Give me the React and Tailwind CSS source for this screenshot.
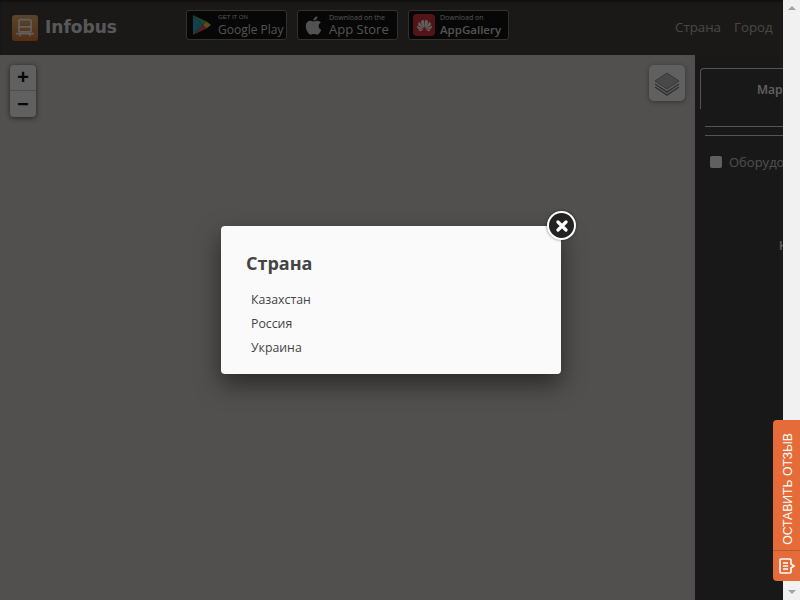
import { FaApple } from "react-icons/fa";
import { SiHuawei } from "react-icons/si";

const BusLogo = () => (
  <div className="w-[26px] h-[26px] rounded-[3px] bg-gradient-to-b from-[#e8b070] to-[#e0701e] flex items-center justify-center">
    <svg width="20" height="20" viewBox="0 0 18 18" fill="none" stroke="#fff" strokeWidth="1.500">
      <rect x="3.500" y="1.500" width="11" height="11" rx="1.500" />
      <path d="M3.500 8h11M1 14h16M4.500 14v2.500M13.500 14v2.500" />
    </svg>
  </div>
);

const PlayIcon = () => (
  <svg width="20" height="22" viewBox="0 0 20 22">
    <path d="M1 1v20l10-10z" fill="#1ea7c9" />
    <path d="M1 1l10 10 3.500-3.500z" fill="#45b76a" />
    <path d="M1 21l10-10 3.500 3.500z" fill="#e2474a" />
    <path d="M14.500 7.500L19 11l-4.500 3.500L11 11z" fill="#f7c322" />
  </svg>
);

const StoreBadge = ({ icon, top, bottom, topClass, bottomClass }) => (
  <div className="w-[101px] h-[30px] rounded-[3px] border border-[#7a7a7a] bg-black flex items-center gap-[5px] px-[4px] overflow-hidden">
    <div className="w-[22px] flex justify-center flex-shrink-0">{icon}</div>
    <div className="flex flex-col text-[#d8d8d8] whitespace-nowrap">
      <span className={`leading-[9px] ${topClass}`}>{top}</span>
      <span className={`leading-[15px] ${bottomClass}`}>{bottom}</span>
    </div>
  </div>
);

const LayersIcon = () => (
  <svg width="26" height="26" viewBox="0 0 26 26" fill="none">
    <path d="M13 3l12 8-12 8-12-8z" fill="#b9b9b9" stroke="#8a8a8a" />
    <path d="M1 14l12 8 12-8M1 17l12 8 12-8" stroke="#777" strokeWidth="1.500" />
  </svg>
);

const FeedbackIcon = () => (
  <svg width="18" height="18" viewBox="0 0 18 18" fill="none" stroke="#fff" strokeWidth="1.600">
    <path d="M3 2h9a1 1 0 0 1 1 1v4l3 2-3 2v4a1 1 0 0 1-1 1H3a1 1 0 0 1-1-1V3a1 1 0 0 1 1-1z" />
    <path d="M5 6h5M5 9h5M5 12h5" />
  </svg>
);

const countries = ["Казахстан", "Россия", "Украина"];

export default function App() {
  return (
    <div className="relative w-[800px] h-[600px] flex overflow-hidden font-['Open_Sans',sans-serif]">
      <div className="relative w-[783px] h-full flex flex-col overflow-hidden flex-shrink-0">
        {/* header */}
        <header className="h-[55px] flex-shrink-0 bg-[#373533] shadow-[inset_0_2px_2px_rgba(0,0,0,0.5)] flex items-center pl-3">
          <BusLogo />
          <span className="ml-[7px] w-[141px] font-['DejaVu_Sans',sans-serif] font-bold text-[17px] text-[#e8e8e8]">Infobus</span>
          <div className="flex gap-[10px] -mt-[5px]">
            <StoreBadge icon={<PlayIcon />} top="GET IT ON" bottom="Google Play" topClass="text-[6px] font-['Liberation_Sans',sans-serif]" bottomClass="text-[12px]" />
            <StoreBadge icon={<FaApple size={21} color="#d8d8d8" />} top="Download on the" bottom="App Store" topClass="text-[7px]" bottomClass="text-[13px]" />
            <StoreBadge icon={<div className="w-[22px] h-[22px] rounded-[4px] bg-[#d9262e] flex items-center justify-center"><SiHuawei size={15} color="#fff" /></div>} top="Download on" bottom="AppGallery" topClass="text-[7px]" bottomClass="text-[11.500px] font-semibold" />
          </div>
          <nav className="ml-[166px] flex gap-[13px] text-[13.300px] text-[#b8b8b8] whitespace-nowrap">
            <span>Страна</span>
            <span>Город</span>
          </nav>
        </header>

        <div className="flex-1 flex min-h-0">
          {/* map */}
          <main className="relative w-[695px] flex-shrink-0 bg-[#d3d0cc]">
            <div className="absolute left-[10px] top-[10px] w-[26px] h-[52px] rounded-[4px] bg-white shadow-[0_1px_5px_rgba(0,0,0,0.65)] flex flex-col font-['Liberation_Mono',monospace] font-bold text-[20px] text-black">
              <div className="h-[26px] flex items-center justify-center border-b border-[#ccc] pt-[3px]">+</div>
              <div className="h-[26px] flex items-center justify-center pt-[3px]">−</div>
            </div>
            <div className="absolute right-[10px] top-[10px] w-[36px] h-[36px] rounded-[5px] bg-white shadow-[0_1px_5px_rgba(0,0,0,0.4)] flex items-center justify-center">
              <LayersIcon />
            </div>
          </main>

          {/* side panel */}
          <aside className="w-[300px] flex-shrink-0 bg-[#363331] pl-[5px] pt-[13px] text-white text-[13px]">
            <div className="w-[200px] h-[41px] rounded-t-[4px] border border-b-0 border-[#ddd] pl-[56px] pt-[13px] font-semibold text-[12px] leading-[16px]">
              Маршруты
            </div>
            <div className="ml-[5px] mt-[17px] h-[10px] border-y border-[#ddd]" />
            <label className="ml-[10px] mt-[17px] flex items-center gap-[7px] h-[20px]">
              <span className="w-[12px] h-[12px] rounded-[2px] bg-white -mt-[3px]" />
              <span className="text-[13px] text-[#ccc] whitespace-nowrap">Оборудование</span>
            </label>
            <p className="ml-[79px] mt-[64px] font-semibold text-[12px] whitespace-nowrap">Нет данных</p>
          </aside>
        </div>

        {/* popup overlay */}
        <div className="absolute inset-0 bg-[#0b0b0b]/65 flex items-center justify-center pr-px">
          <div className="relative w-[340px] h-[148px] bg-[#fafafa] rounded-[4px] shadow-[0_10px_25px_rgba(0,0,0,0.5)] pl-[25px] pt-[24px] text-[#444]">
            <h2 className="font-bold text-[18px] leading-[26px]">Страна</h2>
            <ul className="mt-[12px] pl-[5px] text-[12.300px]">
              {countries.map((c) => (
                <li key={c} className="h-[24px] leading-[24px]">{c}</li>
              ))}
            </ul>
            <button className="absolute -right-[15px] -top-[15px] w-[29px] h-[29px] rounded-full bg-[#222] border-2 border-white flex items-center justify-center shadow-[0_0_3px_rgba(0,0,0,0.5)]">
              <svg width="12" height="12" viewBox="0 0 12 12" stroke="#fff" strokeWidth="3.200" strokeLinecap="round">
                <path d="M2 2l8 8M10 2l-8 8" />
              </svg>
            </button>
          </div>
        </div>
      </div>

      {/* scrollbar */}
      <div className="w-[17px] h-full bg-[#f1f1f1] flex flex-col items-center justify-between py-[6px] flex-shrink-0">
        <div className="w-0 h-0 border-x-[4px] border-x-transparent border-b-[4px] border-b-[#a3a3a3]" />
        <div className="w-0 h-0 border-x-[4px] border-x-transparent border-t-[4px] border-t-[#a3a3a3]" />
      </div>

      {/* feedback tab */}
      <div className="absolute right-0 top-[420px] w-[27px] h-[161px] rounded-l-[4px] bg-[#e56c38] flex flex-col items-center text-white">
        <div className="h-[131px] flex items-center justify-center border-b border-[#b9592e] w-full pt-[7px] pl-[3px]">
          <span className="[writing-mode:vertical-rl] rotate-180 font-['Liberation_Sans',sans-serif] text-[12.200px] whitespace-nowrap">ОСТАВИТЬ ОТЗЫВ</span>
        </div>
        <div className="flex-1 flex items-center justify-center">
          <FeedbackIcon />
        </div>
      </div>
    </div>
  );
}
